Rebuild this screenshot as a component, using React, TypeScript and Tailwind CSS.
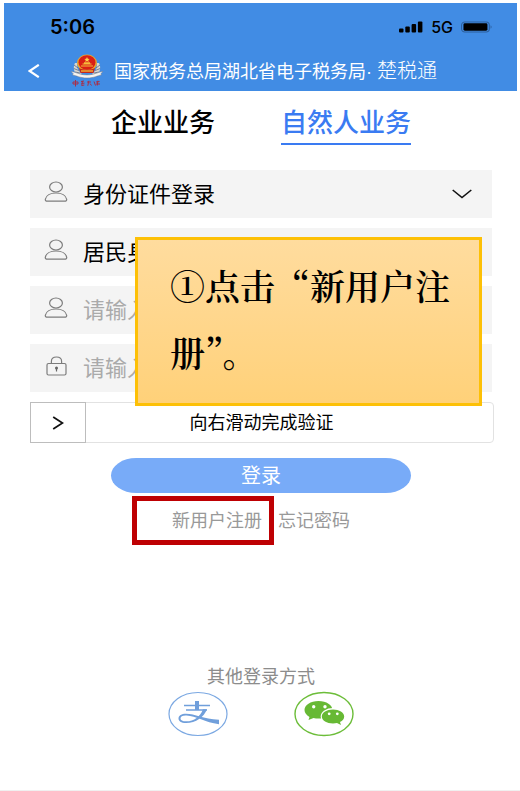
import { useState } from "react";
import type { ReactNode } from "react";

const userIcon = (
  <svg viewBox="0 0 24 22" fill="none" stroke="#7c7c7c" strokeWidth="1.2" className="mb-1 h-[22px] w-6 shrink-0">
    <ellipse cx="12" cy="6" rx="6.4" ry="5" />
    <path d="M3.4 20.2c-1.400 0-2.300-.7-2.100-1.900C2 14.400 6.400 12 12 12s10 2.400 10.700 6.300c.2 1.200-.7 1.900-2.100 1.900H3.400z" />
  </svg>
);

const lockIcon = (
  <svg viewBox="0 0 24 22" fill="none" stroke="#7c7c7c" strokeWidth="1.200" className="mb-1 h-[22px] w-6 shrink-0">
    <rect x="3" y="8.500" width="19" height="11.500" rx="1.500" />
    <path d="M7.400 8.500V6.300c0-2.700 2-4.300 5.100-4.300s5.100 1.600 5.100 4.300v2.200" />
    <circle cx="12.500" cy="13" r="1.500" fill="#666" stroke="none" />
    <path d="M12.500 13v3.500" stroke="#666" />
  </svg>
);

function Emblem() {
  return (
    <svg viewBox="0 0 34 34" className="h-[34px] w-[34px] shrink-0" aria-hidden="true">
      <path d="M5 9C2.500 14 4 19 9 22l3-2C8 17 6.500 13 7.500 9z" fill="#d8d6d0" />
      <path d="M29 9c2.500 5 1 10-4 13l-3-2c4-3 5.500-7 4.500-11z" fill="#d8d6d0" />
      <path d="M4 11l4 3M3.800 14.500l5 2M5 18l5 1M30 11l-4 3M30.200 14.500l-5 2M29 18l-5 1" stroke="#4a5b78" strokeWidth=".7" />
      <ellipse cx="17" cy="9" rx="10" ry="8.500" fill="#e8a72c" />
      <ellipse cx="17" cy="8.500" rx="8.500" ry="7.300" fill="#d91f16" />
      <path d="M17 3l.8 1.700 1.900.2-1.400 1.200.4 1.800-1.700-.9-1.700.9.4-1.800-1.400-1.200 1.900-.2z" fill="#ffd34a" />
      <path d="M11 12h12M12.500 10h9M14 8.800h6" stroke="#f6bd3b" strokeWidth="1.200" />
      <path d="M9 14c4 2 12 2 16 0l-1.500 5h-13z" fill="#c7281c" />
      <path d="M11 17h12" stroke="#f1b436" strokeWidth="1.400" />
      <path d="M1 17.500c5 .3 8 3.400 16 3.400s11-3.100 16-3.400l-2.200 2.200.7 1.300c-4 .4-7 3-14.500 3s-10.500-2.600-14.500-3l.7-1.300z" fill="#f6f4ef" stroke="#6d7890" strokeWidth=".5" />
      <path
        d="M3 28h5v2H3zM5.500 26v6.500M11 27.500l3-.5M11.500 29.500l3-.4M12.500 27l-.8 4.500 2.600-.5M17 28h4M18.800 26.800l-1 5M20 29.500l1.500 2M24 27.500l1.500 4M26 28l3.500-.5M27.800 26.800l-.5 4.700M26 30h4"
        fill="none"
        stroke="#a92f48"
        strokeWidth="1"
      />
    </svg>
  );
}

function StatusBar() {
  return (
    <div className="flex h-12 items-center justify-between pl-[46px] pr-6 text-black">
      <span className="font-[Inter,sans-serif] text-xl font-semibold">5:06</span>
      <div className="flex items-center gap-2">
        <svg viewBox="0 0 24 12" className="h-3 w-6" aria-label="信号">
          <rect x="0" y="7.500" width="4.500" height="4" rx="1" />
          <rect x="6.300" y="5.500" width="4.500" height="6" rx="1" />
          <rect x="12.600" y="3" width="4.500" height="8.500" rx="1" />
          <rect x="18.900" y="0.500" width="4.500" height="11" rx="1" />
        </svg>
        <span className="font-[Inter,sans-serif] text-base font-medium leading-5">5G</span>
        <svg viewBox="0 0 34 12" className="h-3 w-8" aria-label="电量">
          <rect x=".6" y=".6" width="29.500" height="10.800" rx="3.500" fill="none" stroke="#2c5f9c" strokeWidth="1.100" />
          <rect x="2.600" y="2" width="25.500" height="8" rx="1.500" />
          <path d="M31.500 4.200c1.300.4 1.300 3.200 0 3.600z" fill="#2c5f9c" />
        </svg>
      </div>
    </div>
  );
}

function Field({ icon, children }: { icon: ReactNode; children: ReactNode }) {
  return (
    <div className="flex h-12 items-center gap-[15px] bg-[#f4f4f4] pl-3.5 pr-5">
      {icon}
      {children}
    </div>
  );
}

function Chevron() {
  return (
    <svg viewBox="0 0 20 10" fill="none" stroke="#111" strokeWidth="1.600" className="pointer-events-none h-2.5 w-5 shrink-0">
      <path d="M.7 1l9.300 7.500L19.300 1" />
    </svg>
  );
}

export default function App() {
  const [tab, setTab] = useState("person");

  return (
    <div className="flex min-h-screen flex-col border-b border-[#f0f0f0] bg-white pl-1 pr-[3px] pt-[3px] font-['Liberation_Sans','Noto_Sans_CJK_SC',sans-serif]">
      <header className="bg-[#418ce4]">
        <StatusBar />
        <div className="flex h-10 items-center pl-6 text-white">
          <button type="button" aria-label="返回" className="mr-[30px]">
            <svg viewBox="0 0 12 14" fill="none" stroke="currentColor" strokeWidth="2.200" className="h-3.5 w-3">
              <path d="M10.800.8L1.500 7l9.300 6.200" />
            </svg>
          </button>
          <Emblem />
          <h1 className="ml-2.5 whitespace-nowrap text-lg">
            国家税务总局湖北省电子税务局· <span className="text-xl font-light">楚税通</span>
          </h1>
        </div>
      </header>

      <main className="flex flex-1 flex-col pl-[26px] pr-[25px]">
        <nav className="flex justify-center gap-[66px] pt-4">
          <button
            type="button"
            onClick={() => setTab("company")}
            className={`h-[38px] border-b-2 pb-1 text-[26px] font-medium leading-8 ${tab === "company" ? "border-[#3a7bf2] text-[#3a7bf2]" : "border-transparent text-black"}`}
          >
            企业业务
          </button>
          <button
            type="button"
            onClick={() => setTab("person")}
            className={`h-[38px] border-b-2 pb-1 text-[26px] font-medium leading-8 ${tab === "person" ? "border-[#3a7bf2] text-[#3a7bf2]" : "border-transparent text-black"}`}
          >
            自然人业务
          </button>
        </nav>

        <form className="relative mt-[25px] flex flex-col gap-2.5" onSubmit={(e) => e.preventDefault()}>
          <Field icon={userIcon}>
            <select aria-label="登录方式" className="min-w-0 flex-1 appearance-none bg-transparent text-[22px] text-black">
              <option>身份证件登录</option>
            </select>
            <Chevron />
          </Field>
          <Field icon={userIcon}>
            <select aria-label="证件类型" className="min-w-0 flex-1 appearance-none bg-transparent text-[22px] text-black">
              <option>居民身份证</option>
            </select>
            <Chevron />
          </Field>
          <Field icon={userIcon}>
            <input type="text" aria-label="证件号码" placeholder="请输入证件号码" className="min-w-0 flex-1 bg-transparent text-[22px] placeholder:text-[#aaaaaa]" />
          </Field>
          <Field icon={lockIcon}>
            <input type="password" aria-label="密码" placeholder="请输入密码" className="min-w-0 flex-1 bg-transparent text-[22px] placeholder:text-[#aaaaaa]" />
          </Field>

          <div className="-mr-0.5 flex h-[41px] rounded border border-[#e2e2e2]">
            <button type="button" aria-label="滑块" className="-my-px -ml-px flex w-14 items-center justify-center border border-[#bdbdbd] bg-white">
              <svg viewBox="0 0 12 14" fill="none" stroke="#111" strokeWidth="1.800" className="h-3.5 w-3">
                <path d="M1.200 1l9.300 6-9.300 6" />
              </svg>
            </button>
            <span className="flex flex-1 items-center justify-center pr-14 text-lg text-black">向右滑动完成验证</span>
          </div>

          {/* hint bubble over the fields */}
          <div className="absolute left-[105px] right-2.5 top-[67px] h-[169px] border-[3px] border-[#fdc006] bg-linear-to-b from-[#ffdc9e] to-[#ffd179] pl-8 pt-3 font-['Noto_Serif_CJK_SC','Noto_Sans_CJK_SC',serif] text-[35px] font-semibold leading-[67px] text-black">
            ①点击“新用户注册”。
          </div>

          <button type="submit" className="mx-auto mt-[5px] h-[35px] w-[65%] rounded-[26px/18px] bg-[#78abf8] text-xl text-white">
            登录
          </button>
        </form>

        <div className="mt-3.5 flex items-center justify-center gap-1.5 text-lg leading-7 text-[#999999]">
          <a href="#register" className="relative">
            新用户注册
            <span className="pointer-events-none absolute -bottom-2.5 -left-10 -right-3 -top-[11px] border-[5px] border-[#be0003]" />
          </a>
          <span className="text-base">|</span>
          <a href="#forgot">忘记密码</a>
        </div>

        <section className="mb-[53px] mt-auto flex flex-col items-center">
          <h2 className="text-lg leading-7 text-[#8c8c8c]">其他登录方式</h2>
          <div className="flex gap-[66px]">
            <button type="button" aria-label="支付宝登录">
              <svg viewBox="0 0 60 46" className="h-[46px] w-[60px]">
                <ellipse cx="30" cy="23" rx="29" ry="21.500" fill="none" stroke="#7ba8e2" strokeWidth="1.200" />
                <path d="M16 13.700h26v1.500H16zM27 10h4v9h-4zM18 18.200h21v1.500H18z" fill="#709fdb" />
                <path d="M39 18.200C36 26 28 32 18 32c-5 0-7.500-2-7.500-4.600 0-3 3-4.700 7.500-4.700 9 0 17 5.300 33 6v4.600C37 31.600 28 25 18.500 24.600c-3.800-.2-6 1-6 2.800 0 1.800 2 2.900 5.700 2.900 8 0 14-4.600 16.800-12.100z" fill="#709fdb" />
              </svg>
            </button>
            <button type="button" aria-label="微信登录">
              <svg viewBox="0 0 60 46" className="h-[46px] w-[60px]">
                <ellipse cx="30" cy="23" rx="29" ry="21.500" fill="none" stroke="#6cbd39" strokeWidth="1.400" />
                <path d="M24.500 10C16.500 10 10.500 14 10.500 19c0 2.800 1.900 5.200 5 6.900l-1 3.100 5-2c1.600.4 3.200.6 5 .6 8 0 14-3.700 14-8.600S32.500 10 24.500 10z" fill="#67b934" />
                <ellipse cx="39" cy="25.500" rx="12.300" ry="8.400" fill="white" />
                <path d="M39 18.400c-6.200 0-11.200 3.100-11.200 7s5 7 11.200 7c1.500 0 2.800-.2 4-.5l4 2.200-1-3.100c2.600-1.300 4.200-3.300 4.200-5.600 0-3.900-5-7-11.200-7z" fill="#67b934" />
                <circle cx="19.700" cy="15.800" r="1.700" fill="white" />
                <circle cx="31" cy="15.800" r="1.700" fill="white" />
                <circle cx="35.200" cy="22.800" r="1.400" fill="white" />
                <circle cx="43.300" cy="22.800" r="1.400" fill="white" />
              </svg>
            </button>
          </div>
        </section>
      </main>
    </div>
  );
}
